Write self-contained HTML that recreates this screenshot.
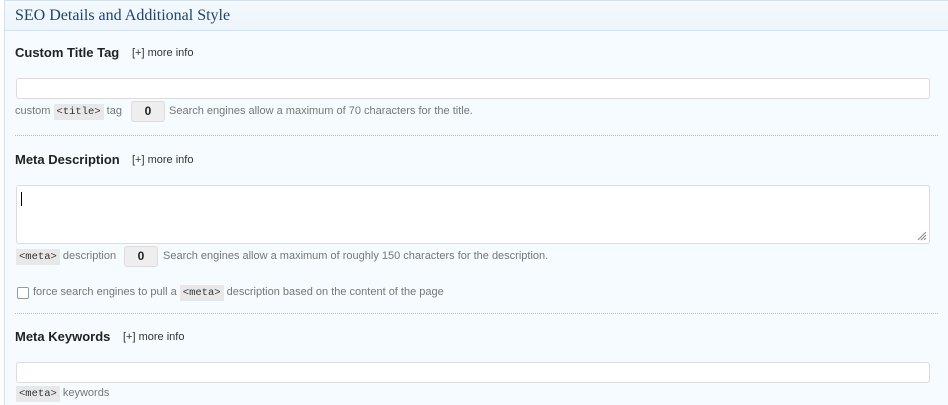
<!DOCTYPE html>
<html><head><style>
body{margin:0;width:948px;height:405px;overflow:hidden;background:#fff;font-family:"Liberation Sans",Arial,sans-serif;}
.panel{position:absolute;left:4px;top:0;width:944px;height:405px;background:#f5fbfe;border-left:1px solid #cfe3ef;border-top:1px solid #cfe3ef;box-sizing:border-box}
.hdr{position:absolute;left:0;top:0;width:100%;height:30px;background:linear-gradient(#f4f9fd,#ecf5fb);border-bottom:1px solid #cbe2ee;box-sizing:border-box}
.hdr span{position:absolute;left:10px;top:6px;font-family:"Liberation Serif",serif;font-size:16px;color:#1e4468}
.abs{position:absolute;white-space:nowrap}
.lbl{font-size:13px;font-weight:bold;color:#222}
.more{font-size:11px;color:#333}
.inp{position:absolute;left:11px;width:914px;background:#fff;border:1px solid #dcdcdc;border-radius:3px;box-sizing:border-box}
.help{font-size:11px;color:#777}
code{font-family:"Liberation Mono",monospace;font-size:10.5px;background:#e8e8e8;color:#333;padding:2px 3px}
.cnt{position:absolute;background:#eeeeee;border:1px solid #dcdcdc;border-radius:3px;box-sizing:border-box;font-size:12px;font-weight:bold;color:#222;text-align:center;line-height:18px}
.dot{position:absolute;left:10px;width:923px;border-top:1px dotted #bbb}
</style></head><body>
<div class="panel">
<div class="hdr"><span>SEO Details and Additional Style</span></div>
<div class="abs lbl" style="left:10px;top:44px">Custom Title Tag</div>
<div class="abs more" style="left:127px;top:46px">[+] more info</div>
<div class="inp" style="top:77px;height:21px"></div>
<div class="abs help" style="left:10px;top:104px">custom <code>&lt;title&gt;</code> tag</div>
<div class="cnt" style="left:126px;top:100px;width:34px;height:21px">0</div>
<div class="abs help" style="left:164px;top:104px">Search engines allow a maximum of 70 characters for the title.</div>
<div class="dot" style="top:134px"></div>
<div class="abs lbl" style="left:10px;top:151px">Meta Description</div>
<div class="abs more" style="left:127px;top:153px">[+] more info</div>
<div class="inp" style="top:184px;height:59px"><div style="position:absolute;left:4px;top:6px;width:1px;height:14px;background:#000"></div>
<svg style="position:absolute;right:2px;bottom:2px" width="10" height="10"><path d="M9 1L1 9M9 4L4 9M9 7L7 9" stroke="#888" stroke-width="1"/></svg></div>
<div class="abs help" style="left:11px;top:249px"><code>&lt;meta&gt;</code> description</div>
<div class="cnt" style="left:119px;top:245px;width:34px;height:21px">0</div>
<div class="abs help" style="left:158px;top:249px">Search engines allow a maximum of roughly 150 characters for the description.</div>
<div class="abs" style="left:12px;top:286px;width:10px;height:10px;border:1px solid #999;border-radius:2px;background:#fff"></div>
<div class="abs help" style="left:28px;top:285px">force search engines to pull a <code>&lt;meta&gt;</code> description based on the content of the page</div>
<div class="dot" style="top:312px"></div>
<div class="abs lbl" style="left:10px;top:328px">Meta Keywords</div>
<div class="abs more" style="left:118px;top:330px">[+] more info</div>
<div class="inp" style="top:361px;height:21px"></div>
<div class="abs help" style="left:11px;top:386px"><code>&lt;meta&gt;</code> keywords</div>
</div>
</body></html>
